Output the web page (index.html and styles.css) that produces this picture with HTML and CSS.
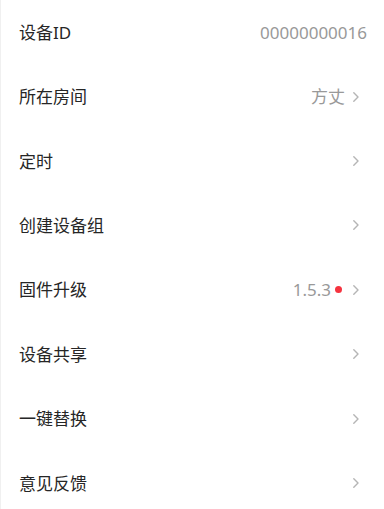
FILE: index.html
```html
<!DOCTYPE html>
<html lang="zh-CN">
<head>
<meta charset="utf-8">
<link rel="stylesheet" href="styles.css">
</head>
<body>
<div class="list">
  <div class="row"><span class="label">设备ID</span><span class="value">00000000016</span></div>
  <div class="row"><span class="label">所在房间</span><span class="value">方丈</span><svg class="chev" width="6" height="10" viewBox="0 0 6 10"><polyline points="0.8,0.8 5,5 0.8,9.2"/></svg></div>
  <div class="row"><span class="label">定时</span><svg class="chev" width="6" height="10" viewBox="0 0 6 10"><polyline points="0.8,0.8 5,5 0.8,9.2"/></svg></div>
  <div class="row"><span class="label">创建设备组</span><svg class="chev" width="6" height="10" viewBox="0 0 6 10"><polyline points="0.8,0.8 5,5 0.8,9.2"/></svg></div>
  <div class="row"><span class="label">固件升级</span><span class="value">1.5.3</span><span class="dot"></span><svg class="chev" width="6" height="10" viewBox="0 0 6 10"><polyline points="0.8,0.8 5,5 0.8,9.2"/></svg></div>
  <div class="row"><span class="label">设备共享</span><svg class="chev" width="6" height="10" viewBox="0 0 6 10"><polyline points="0.8,0.8 5,5 0.8,9.2"/></svg></div>
  <div class="row"><span class="label">一键替换</span><svg class="chev" width="6" height="10" viewBox="0 0 6 10"><polyline points="0.8,0.8 5,5 0.8,9.2"/></svg></div>
  <div class="row"><span class="label">意见反馈</span><svg class="chev" width="6" height="10" viewBox="0 0 6 10"><polyline points="0.8,0.8 5,5 0.8,9.2"/></svg></div>
</div>
</body>
</html>
```
FILE: styles.css
```css
html, body {
  margin: 0;
  padding: 0;
  background: #ffffff;
}
body {
  font-family: "Noto Sans", "Noto Sans CJK SC", sans-serif;
  width: 384px;
  height: 509px;
  overflow: hidden;
}
.list {
  display: flex;
  flex-direction: column;
  border-left: 1px solid #f0f0f0;
  height: 509px;
  box-sizing: border-box;
}
.row {
  height: 64.43px;
  flex: none;
  display: flex;
  align-items: center;
  padding: 0 17px 0 18px;
}
.label {
  flex: 1;
  font-size: 17px;
  color: #262626;
  line-height: 1;
}
.value {
  font-size: 17px;
  color: #999999;
  line-height: 1;
}
.dot {
  width: 7px;
  height: 7px;
  border-radius: 50%;
  background: #f5333f;
  margin-left: 4px;
  margin-right: 3px;
}
.chev {
  margin-left: 8px;
  margin-right: 8px;
  flex: none;
}
.chev polyline {
  fill: none;
  stroke: #b5b5b5;
  stroke-width: 1.4;
  stroke-linecap: round;
  stroke-linejoin: round;
}
```
